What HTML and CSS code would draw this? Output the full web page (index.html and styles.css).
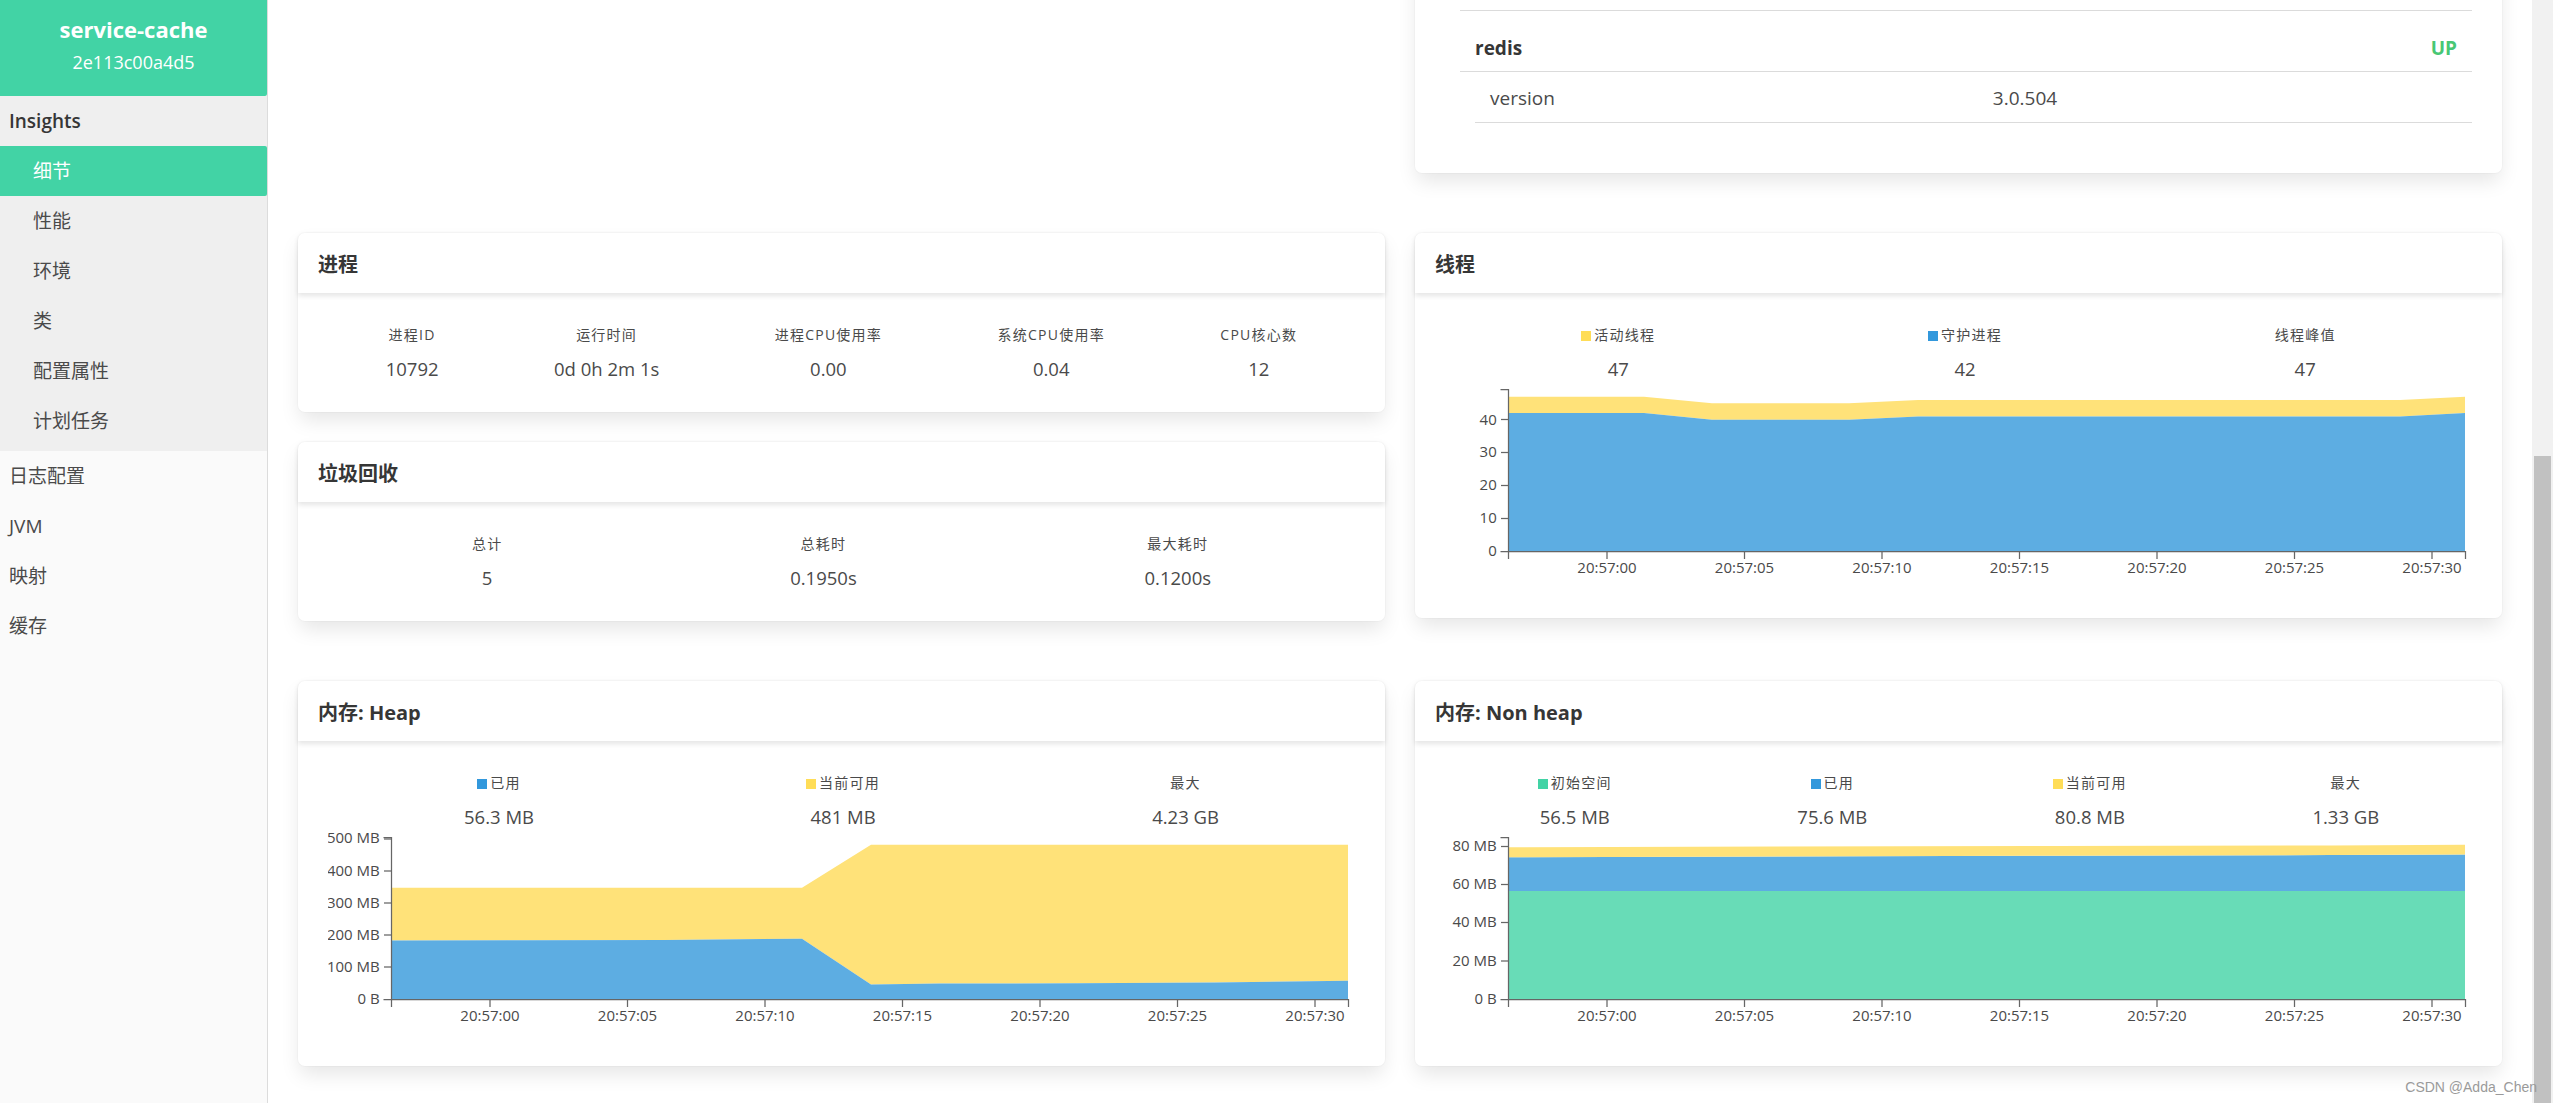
FILE: index.html
```html
<!DOCTYPE html>
<html lang="zh-CN">
<head>
<meta charset="utf-8">
<title>service-cache - 细节</title>
<link rel="stylesheet" href="styles.css">
</head>
<body>
<aside class="sidebar">
  <div class="brand">
    <div class="brand-name">service-cache</div>
    <div class="brand-id">2e113c00a4d5</div>
  </div>
  <div class="nav-group">
    <div class="nav-group-title">Insights</div>
    <a class="nav-item nav-sub is-active">细节</a>
    <a class="nav-item nav-sub">性能</a>
    <a class="nav-item nav-sub">环境</a>
    <a class="nav-item nav-sub">类</a>
    <a class="nav-item nav-sub">配置属性</a>
    <a class="nav-item nav-sub">计划任务</a>
  </div>
  <a class="nav-item">日志配置</a>
  <a class="nav-item">JVM</a>
  <a class="nav-item">映射</a>
  <a class="nav-item">缓存</a>
</aside>

<main class="main">
  <div class="row">
    <div class="col"></div>
    <div class="col">
      <div class="card health-card">
        <div class="health-content">
          <div class="health-group">
            <div class="health-head"><span>redis</span><span class="status-up">UP</span></div>
            <div class="health-details">
              <div class="detail-row"><span class="detail-key">version</span><span class="detail-val">3.0.504</span></div>
            </div>
          </div>
        </div>
      </div>
    </div>
  </div>

  <div class="row">
    <div class="col">
      <div class="card">
        <div class="card-header"><span class="card-title">进程</span></div>
        <div class="card-content">
          <div class="level">
            <div class="level-item"><p class="heading">进程ID</p><p class="value">10792</p></div>
            <div class="level-item"><p class="heading">运行时间</p><p class="value">0d 0h 2m 1s</p></div>
            <div class="level-item"><p class="heading">进程CPU使用率</p><p class="value">0.00</p></div>
            <div class="level-item"><p class="heading">系统CPU使用率</p><p class="value">0.04</p></div>
            <div class="level-item"><p class="heading">CPU核心数</p><p class="value">12</p></div>
          </div>
        </div>
      </div>
      <div class="card">
        <div class="card-header"><span class="card-title">垃圾回收</span></div>
        <div class="card-content">
          <div class="level">
            <div class="level-item"><p class="heading">总计</p><p class="value">5</p></div>
            <div class="level-item"><p class="heading">总耗时</p><p class="value">0.1950s</p></div>
            <div class="level-item"><p class="heading">最大耗时</p><p class="value">0.1200s</p></div>
          </div>
        </div>
      </div>
    </div>
    <div class="col">
      <div class="card">
        <div class="card-header"><span class="card-title">线程</span></div>
        <div class="card-content">
          <div class="level">
            <div class="level-item"><p class="heading"><span class="swatch swatch-yellow"></span>活动线程</p><p class="value">47</p></div>
            <div class="level-item"><p class="heading"><span class="swatch swatch-blue"></span>守护进程</p><p class="value">42</p></div>
            <div class="level-item"><p class="heading">线程峰值</p><p class="value">47</p></div>
          </div>
          <svg class="chart" viewBox="0 0 1027 205" width="1027" height="205">
            <path class="area-yellow" d="M63,13.7 L199,13.7 L267,20.3 L404,20.3 L473,17 L955,17 L1020,13.7 V30.1 L955,33.4 L473,33.4 L404,36.7 L267,36.7 L199,30.1 L63,30.1 Z"/>
            <path class="area-blue" d="M63,168 V30.1 L199,30.1 L267,36.7 L404,36.7 L473,33.4 L955,33.4 L1020,30.1 V168 Z"/>
            <g class="axis">
              <path d="M55.5,168.5 H63.5 V6.5 H55.5"/>
              <line x1="56" x2="63.5" y1="135.5" y2="135.5"/>
              <line x1="56" x2="63.5" y1="102.5" y2="102.5"/>
              <line x1="56" x2="63.5" y1="69.5" y2="69.5"/>
              <line x1="56" x2="63.5" y1="36.5" y2="36.5"/>
              <text x="51.75" y="172.8">0</text>
              <text x="51.75" y="140">10</text>
              <text x="51.75" y="107.1">20</text>
              <text x="51.75" y="74.3">30</text>
              <text x="51.75" y="41.5">40</text>
              <path d="M63.5,176 V168.5 H1020.5 V176"/>
              <line x1="162" x2="162" y1="168.5" y2="176"/>
              <line x1="299.5" x2="299.5" y1="168.5" y2="176"/>
              <line x1="437" x2="437" y1="168.5" y2="176"/>
              <line x1="574.5" x2="574.5" y1="168.5" y2="176"/>
              <line x1="712" x2="712" y1="168.5" y2="176"/>
              <line x1="849.5" x2="849.5" y1="168.5" y2="176"/>
              <line x1="987" x2="987" y1="168.5" y2="176"/>
              <text class="xl" x="162" y="190">20:57:00</text>
              <text class="xl" x="299.5" y="190">20:57:05</text>
              <text class="xl" x="437" y="190">20:57:10</text>
              <text class="xl" x="574.5" y="190">20:57:15</text>
              <text class="xl" x="712" y="190">20:57:20</text>
              <text class="xl" x="849.5" y="190">20:57:25</text>
              <text class="xl" x="987" y="190">20:57:30</text>
            </g>
          </svg>
        </div>
      </div>
    </div>
  </div>

  <div class="row">
    <div class="col">
      <div class="card">
        <div class="card-header"><span class="card-title">内存: Heap</span></div>
        <div class="card-content">
          <div class="level">
            <div class="level-item"><p class="heading"><span class="swatch swatch-blue"></span>已用</p><p class="value">56.3 MB</p></div>
            <div class="level-item"><p class="heading"><span class="swatch swatch-yellow"></span>当前可用</p><p class="value">481 MB</p></div>
            <div class="level-item"><p class="heading">最大</p><p class="value">4.23 GB</p></div>
          </div>
          <svg class="chart" viewBox="0 0 1027 205" width="1027" height="205">
            <path class="area-yellow" d="M63,56.7 L474,56.7 L543,13.7 L1020,13.7 V149.7 L886,151.6 L749,152.3 L612,152.6 L543,153.6 L474,107.7 L337,109 L200,109.3 L63,109.6 Z"/>
            <path class="area-blue" d="M63,168 V109.6 L200,109.3 L337,109 L474,107.7 L543,153.6 L612,152.6 L749,152.3 L886,151.6 L1020,149.7 V168 Z"/>
            <g class="axis">
              <path d="M55.5,168.5 H63.5 V6.5 H55.5"/>
              <line x1="56" x2="63.5" y1="136" y2="136"/>
              <line x1="56" x2="63.5" y1="104" y2="104"/>
              <line x1="56" x2="63.5" y1="72" y2="72"/>
              <line x1="56" x2="63.5" y1="40" y2="40"/>
              <line x1="56" x2="63.5" y1="8" y2="8"/>
              <text x="51.75" y="172.8">0 B</text>
              <text x="51.75" y="140.7">100 MB</text>
              <text x="51.75" y="108.6">200 MB</text>
              <text x="51.75" y="76.6">300 MB</text>
              <text x="51.75" y="44.5">400 MB</text>
              <text x="51.75" y="12.4">500 MB</text>
              <path d="M63.5,176 V168.5 H1020.5 V176"/>
              <line x1="162" x2="162" y1="168.5" y2="176"/>
              <line x1="299.5" x2="299.5" y1="168.5" y2="176"/>
              <line x1="437" x2="437" y1="168.5" y2="176"/>
              <line x1="574.5" x2="574.5" y1="168.5" y2="176"/>
              <line x1="712" x2="712" y1="168.5" y2="176"/>
              <line x1="849.5" x2="849.5" y1="168.5" y2="176"/>
              <line x1="987" x2="987" y1="168.5" y2="176"/>
              <text class="xl" x="162" y="190">20:57:00</text>
              <text class="xl" x="299.5" y="190">20:57:05</text>
              <text class="xl" x="437" y="190">20:57:10</text>
              <text class="xl" x="574.5" y="190">20:57:15</text>
              <text class="xl" x="712" y="190">20:57:20</text>
              <text class="xl" x="849.5" y="190">20:57:25</text>
              <text class="xl" x="987" y="190">20:57:30</text>
            </g>
          </svg>
        </div>
      </div>
    </div>
    <div class="col">
      <div class="card">
        <div class="card-header"><span class="card-title">内存: Non heap</span></div>
        <div class="card-content">
          <div class="level">
            <div class="level-item"><p class="heading"><span class="swatch swatch-green"></span>初始空间</p><p class="value">56.5 MB</p></div>
            <div class="level-item"><p class="heading"><span class="swatch swatch-blue"></span>已用</p><p class="value">75.6 MB</p></div>
            <div class="level-item"><p class="heading"><span class="swatch swatch-yellow"></span>当前可用</p><p class="value">80.8 MB</p></div>
            <div class="level-item"><p class="heading">最大</p><p class="value">1.33 GB</p></div>
          </div>
          <svg class="chart" viewBox="0 0 1027 205" width="1027" height="205">
            <path class="area-green" d="M63,168 V60.1 H1020 V168 Z"/>
            <path class="area-blue" d="M63,26.3 L337,25.5 L612,24.8 L886,24 L1020,23.6 V60.1 H63 Z"/>
            <path class="area-yellow" d="M63,16.2 L612,15 L886,14.5 L1020,13.7 V23.6 L886,24 L612,24.8 L337,25.5 L63,26.3 Z"/>
            <g class="axis">
              <path d="M55.5,168.5 H63.5 V6.5 H55.5"/>
              <line x1="56" x2="63.5" y1="130" y2="130"/>
              <line x1="56" x2="63.5" y1="91.5" y2="91.5"/>
              <line x1="56" x2="63.5" y1="53.5" y2="53.5"/>
              <line x1="56" x2="63.5" y1="15.5" y2="15.5"/>
              <text x="51.75" y="172.8">0 B</text>
              <text x="51.75" y="134.6">20 MB</text>
              <text x="51.75" y="96.4">40 MB</text>
              <text x="51.75" y="58.2">60 MB</text>
              <text x="51.75" y="20">80 MB</text>
              <path d="M63.5,176 V168.5 H1020.5 V176"/>
              <line x1="162" x2="162" y1="168.5" y2="176"/>
              <line x1="299.5" x2="299.5" y1="168.5" y2="176"/>
              <line x1="437" x2="437" y1="168.5" y2="176"/>
              <line x1="574.5" x2="574.5" y1="168.5" y2="176"/>
              <line x1="712" x2="712" y1="168.5" y2="176"/>
              <line x1="849.5" x2="849.5" y1="168.5" y2="176"/>
              <line x1="987" x2="987" y1="168.5" y2="176"/>
              <text class="xl" x="162" y="190">20:57:00</text>
              <text class="xl" x="299.5" y="190">20:57:05</text>
              <text class="xl" x="437" y="190">20:57:10</text>
              <text class="xl" x="574.5" y="190">20:57:15</text>
              <text class="xl" x="712" y="190">20:57:20</text>
              <text class="xl" x="849.5" y="190">20:57:25</text>
              <text class="xl" x="987" y="190">20:57:30</text>
            </g>
          </svg>
        </div>
      </div>
    </div>
  </div>
</main>

<div class="scrollbar"><div class="scroll-thumb"></div></div>
<div class="watermark">CSDN @Adda_Chen</div>
</body>
</html>
```

FILE: styles.css
```css
* { box-sizing: border-box; }
html, body { margin: 0; padding: 0; }
p { margin: 0; }

body {
  display: flex;
  width: 2553px;
  height: 1103px;
  overflow: hidden;
  position: relative;
  background: #fff;
  color: #4a4a4a;
  font-family: "Open Sans", "Noto Sans CJK SC", sans-serif;
}

/* ---------- sidebar ---------- */
.sidebar {
  width: 268px;
  flex: none;
  background: #fafafa;
  border-right: 1px solid #dcdcdc;
}
.brand {
  height: 96px;
  background: #42d3a5;
  color: #fff;
  text-align: center;
  padding-top: 13px;
  border-bottom-right-radius: 2px;
}
.brand-name { font-size: 22px; font-weight: 700; line-height: 32px; }
.brand-id { font-size: 18px; line-height: 26px; margin-top: 4px; }

.nav-group { background: #efefef; padding-bottom: 5px; }
.nav-group-title {
  height: 50px;
  line-height: 50px;
  padding-left: 9px;
  font-size: 19px;
  font-weight: 600;
  color: #363636;
}
.nav-item {
  display: block;
  height: 50px;
  line-height: 50px;
  padding-left: 9px;
  font-size: 19px;
  color: #4a4a4a;
}
.nav-sub { padding-left: 33px; }
.nav-item.is-active {
  background: #42d3a5;
  color: #fff;
  border-radius: 0 2px 2px 0;
}

/* ---------- main ---------- */
.main {
  flex: 1;
  min-width: 0;
  display: flex;
  flex-direction: column;
  gap: 60px;
  padding: 0 30px;
}
.row { display: flex; gap: 30px; align-items: flex-start; }
.col {
  flex: 1 1 0;
  min-width: 0;
  display: flex;
  flex-direction: column;
  gap: 30px;
}

.card {
  background: #fff;
  border-radius: 7px;
  box-shadow: 0 10px 20px -2.5px rgba(10, 10, 10, 0.1), 0 0 0 1px rgba(10, 10, 10, 0.02);
}
.card-header {
  height: 60px;
  display: flex;
  align-items: center;
  padding: 0 20px;
  border-radius: 7px 7px 0 0;
  box-shadow: 0 2.5px 5px rgba(10, 10, 10, 0.1);
}
.card-title { font-size: 20px; font-weight: 700; color: #363636; }
.card-content { padding: 30px; }

.level { display: flex; }
.level-item { flex: 1 1 auto; text-align: center; }
.heading {
  font-size: 14px;
  letter-spacing: 1.25px;
  line-height: 24px;
  margin-bottom: 8px;
  color: #4a4a4a;
}
.value { font-size: 18.5px; line-height: 27px; color: #4a4a4a; }

.swatch {
  display: inline-block;
  width: 10px;
  height: 10px;
  margin-right: 3px;
  vertical-align: -1px;
}
.swatch-yellow { background: #ffdd57; }
.swatch-blue { background: #3298dc; }
.swatch-green { background: #42d3a5; }

/* ---------- charts ---------- */
.chart { display: block; width: 100%; height: 205px; overflow: hidden; margin-top: 1px; }
.area-yellow { fill: #ffe279; }
.area-blue { fill: #5dade2; }
.area-green { fill: #68dcb7; }
.axis path, .axis line { stroke: #666; stroke-width: 1.25; fill: none; }
.axis text {
  font-family: "Open Sans", sans-serif;
  font-size: 15px;
  fill: #4a4a4a;
  text-anchor: end;
}
.axis text.xl { text-anchor: middle; }

/* ---------- health ---------- */
.health-card { margin-top: -60px; }
.health-content { padding: 70px 30px 50px 45px; }
.health-group { border-top: 1px solid #dbdbdb; }
.health-head {
  display: flex;
  justify-content: space-between;
  padding: 22px 15px 8px;
  line-height: 30px;
  font-size: 19px;
  font-weight: 700;
  color: #363636;
  border-bottom: 1px solid #dbdbdb;
}
.status-up { color: #48c774; }
.health-details { margin-left: 15px; }
.detail-row {
  display: flex;
  padding: 11px 15px 9px;
  line-height: 30px;
  font-size: 19px;
  border-bottom: 1px solid #dbdbdb;
}
.detail-key { flex: 0 0 52%; }

/* ---------- fake page scrollbar ---------- */
.scrollbar {
  width: 21px;
  flex: none;
  background: #f1f1f1;
  display: flex;
  flex-direction: column;
  padding: 456px 2px 0;
}
.scroll-thumb { flex: 1; background: #c1c1c1; }

.watermark {
  position: absolute;
  right: 16px;
  bottom: 8px;
  font-family: "Liberation Sans", sans-serif;
  font-size: 14px;
  color: #9a9a9a;
}
```
